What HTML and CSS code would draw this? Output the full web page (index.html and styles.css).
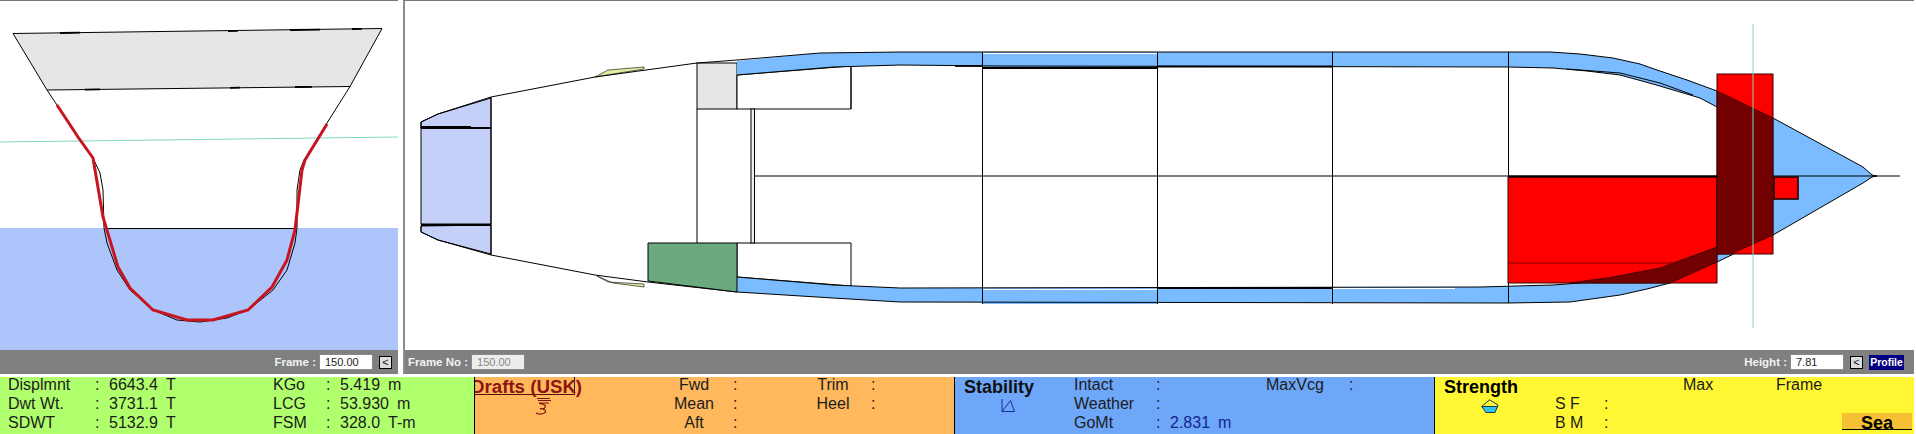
FILE: index.html
```html
<!DOCTYPE html>
<html lang="en">
<head>
<meta charset="utf-8">
<title>Loading computer</title>
<link rel="stylesheet" href="styles.css">
</head>
<body>
<div class="views">
  <section class="view view-section">
    <svg class="canvas" viewBox="0 1 398 349" aria-label="Frame section">
      <rect class="water" x="0" y="228" width="398" height="122"/>
      <polygon class="deck" points="13,33.5 382,28.5 350,86.5 47,90"/>
      <line class="thick" x1="60" y1="33" x2="80" y2="32.7"/>
      <line class="thick" x1="228" y1="31" x2="238" y2="30.8"/>
      <line class="thick" x1="290" y1="30" x2="320" y2="29.6"/>
      <line class="thick" x1="352" y1="29" x2="362" y2="28.8"/>
      <line class="thick" x1="85" y1="89.6" x2="100" y2="89.4"/>
      <line class="thick" x1="230" y1="87.8" x2="240" y2="87.7"/>
      <line class="thick" x1="295" y1="87" x2="312" y2="86.8"/>
      <polyline class="hull" points="47,90 57,105 77,135 93,158 100,173 103,190 104,228 107,243 117,270 130,290 153,310 177,320 200,322 227,318 248,310 273,290 287,270 295,243 297,228 297,190 300,170 304,160 327,123 350,86.5"/>
      <line class="hull" x1="105" y1="228.5" x2="297" y2="228.5"/>
      <line class="teal" x1="0" y1="142" x2="398" y2="137"/>
      <polyline class="red-line" points="57,105 78,137 93,158 103,217 118,267 130,288 153,310 187,320 213,320 248,310 272,287 287,260 295,230 302,170 305,160 327,124"/>
    </svg>
    <div class="toolbar">
      <span class="tool-label">Frame :</span>
      <div class="field">150.00</div>
      <div class="mini-btn">&lt;</div>
    </div>
  </section>

  <section class="view view-plan">
    <svg class="canvas" viewBox="405 1 1509 349" aria-label="Ship plan">
      <!-- transom -->
      <polygon class="peri" points="421,122 438,114 491,98 491,128 421,128"/>
      <rect class="peri" x="421" y="128" width="70" height="96"/>
      <polygon class="peri" points="421,232 438,240 491,254 491,225 421,226"/>
      <line class="thick" x1="421" y1="128" x2="491" y2="128"/>
      <line class="thick" x1="421" y1="225" x2="491" y2="225"/>
      <line class="line" x1="421" y1="126.5" x2="471" y2="126.5"/>
      <!-- patches -->
      <polygon class="patch" points="595,77 608,70 644,67 644,69 613,74"/>
      <polygon class="patch" points="597,276 608,282 644,284 644,287 613,283"/>
      <!-- rooms -->
      <rect class="grey-box" x="697" y="63" width="40" height="46"/>
      <polygon class="room" points="737,75 851,66 851,109 737,109"/>
      <polygon class="room" points="737,243 851,243 851,286 737,277"/>
      <!-- blue side tanks -->
      <polygon class="blue" points="737,61 820,53 900,52 1508,52 1550,52 1580,54 1613,58 1640,64 1657,70 1687,80 1717,91 1717,107 1700,98 1680,92 1653,84 1620,75 1587,71 1553,68 1508,67 1000,66 900,65 833,67 737,75"/>
      <polygon class="blue" points="737,277 833,285 900,288 1480,287 1553,285 1580,283 1613,277 1660,268 1717,247 1717,262 1670,283 1647,289 1620,295 1570,302 1508,303 900,302 833,298 737,292"/>
      <polygon class="blue" points="1717,91 1773,118 1863,167 1872,175 1877,176 1872,177 1863,183 1773,235 1717,262"/>
      <rect class="blue" x="982" y="53" width="175" height="15"/>
      <rect class="blue" x="982" y="289" width="175" height="15"/>
      <line class="white-line" x1="982" y1="53.5" x2="1157" y2="53.5"/>
      <line class="white-line" x1="982" y1="289.5" x2="1157" y2="289.5"/>
      <line class="white-line" x1="1332" y1="288.5" x2="1455" y2="288.5"/>
      <!-- hull lines -->
      <polyline class="hull" points="421,122 438,114 491,97 595,77 697,63 737,60 820,53 900,52 1508,52 1550,52 1580,54 1613,58 1640,64 1657,70 1687,80 1717,91 1773,118 1863,167 1872,175 1877,176 1872,177 1863,183 1773,235 1717,262 1670,283 1647,289 1620,295 1570,302 1508,303 900,302 833,298 737,292 648,282 595,275 491,255 438,240 421,232"/>
      <polyline class="hull" points="737,75 833,67 900,65 1000,66 1508,67 1553,68 1587,71 1620,75 1653,84 1680,92 1700,98 1717,107"/>
      <polyline class="hull" points="1567,69 1620,73 1660,83 1693,95"/>
      <polyline class="hull" points="737,277 833,285 900,288 1480,287 1553,285 1580,283 1613,277 1660,268 1717,247"/>
      <line class="hull" x1="421" y1="122" x2="421" y2="128"/>
      <line class="hull" x1="421" y1="226" x2="421" y2="232"/>
      <line class="thick" x1="1157" y1="66.5" x2="1332" y2="66.5"/>
      <line class="thick" x1="1157" y1="288" x2="1332" y2="288"/>
      <line class="thick" x1="955" y1="66" x2="982" y2="66"/>
      <line class="thick" x1="982" y1="68" x2="1157" y2="68"/>
      <!-- structure -->
      <line class="line" x1="491" y1="97" x2="491" y2="255"/>
      <line class="line" x1="851" y1="67" x2="851" y2="109"/>
      <polygon class="green" points="648,243 737,243 737,292 648,281"/>
      <line class="line" x1="697" y1="109" x2="697" y2="243"/>
      <rect class="strip" x="751" y="109" width="3.5" height="134"/>
      <line class="line" x1="754" y1="176" x2="1900" y2="176"/>
      <line class="line" x1="982.5" y1="52" x2="982.5" y2="304"/>
      <line class="line" x1="1157.5" y1="52" x2="1157.5" y2="304"/>
      <line class="line" x1="1332.5" y1="52" x2="1332.5" y2="304"/>
      <line class="line" x1="1508.5" y1="52" x2="1508.5" y2="303"/>
      <!-- red loads -->
      <rect class="red-box" x="1508" y="177" width="209" height="106"/>
      <line class="dark-line" x1="1508" y1="263" x2="1717" y2="263"/>
      <rect class="red-box" x="1717" y="74" width="56" height="180"/>
      <polygon class="maroon" points="1717,91 1773,118 1773,235 1731,254 1717,254"/>
      <polygon class="maroon" points="1717,247 1660,268 1613,277 1570,283 1670,283 1717,262"/>
      <line class="thick" x1="1508" y1="176.5" x2="1717" y2="176.5"/>
      <rect class="red-small" x="1774" y="177" width="24" height="22"/>
      <line class="teal" x1="1753" y1="24" x2="1753" y2="328"/>
    </svg>
    <div class="toolbar">
      <span class="tool-label">Frame No :</span>
      <div class="field field-off">150.00</div>
      <span class="tool-space"></span>
      <span class="tool-label">Height :</span>
      <div class="field">7.81</div>
      <div class="mini-btn">&lt;</div>
      <div class="profile-btn">Profile</div>
    </div>
  </section>
</div>

<div class="panels">
  <div class="panel panel-load">
    <span>Displmnt</span><span>:</span><span class="val">6643.4<i>T</i></span><span>KGo</span><span>:</span><span class="val">5.419<i>m</i></span>
    <span>Dwt Wt.</span><span>:</span><span class="val">3731.1<i>T</i></span><span>LCG</span><span>:</span><span class="val">53.930<i>m</i></span>
    <span>SDWT</span><span>:</span><span class="val">5132.9<i>T</i></span><span>FSM</span><span>:</span><span class="val">328.0<i>T-m</i></span>
  </div>

  <div class="panel panel-drafts">
    <div class="head">
      <div class="drafts-title"><span>Drafts (USK)</span></div>
      <svg class="icon icon-rupee" viewBox="0 0 17 17">
        <path d="M2 .5H15M3 2.5H16M4 5H14M4 5.5C9 6 11 7 10 9.5 9 11.5 6 11 5 10.5 9 11 11 12 10.5 14 9 16.5 3 16.5 1 15"/>
      </svg>
    </div>
    <span class="c">Fwd</span><span>:</span><span class="c">Trim</span><span>:</span>
    <span class="c">Mean</span><span>:</span><span class="c">Heel</span><span>:</span>
    <span class="c">Aft</span><span>:</span>
  </div>

  <div class="panel panel-stab">
    <div class="head">
      <div class="title">Stability</div>
      <svg class="icon icon-angle" viewBox="0 0 14 13">
        <path d="M1 0V12.5H13.5L9.5 1.5 1 12.5"/>
      </svg>
    </div>
    <span>Intact</span><span>:</span><span></span><span>MaxVcg</span><span>:</span>
    <span>Weather</span><span>:</span><span></span><span></span><span></span>
    <span>GoMt</span><span>:</span><span class="val val-blue">2.831<i>m</i></span><span></span><span></span>
  </div>

  <div class="panel panel-strength">
    <div class="head">
      <div class="title">Strength</div>
      <svg class="icon icon-boat" viewBox="0 0 18 15">
        <path class="boat-water" d="M.8 7.5H17L14 13.5H5Z"/>
        <path d="M8.5.8.8 7.5 5 13.5H14L17 6ZM.8 7.5H17"/>
      </svg>
    </div>
    <span></span><span></span><span class="hd">Max</span><span class="hd">Frame</span>
    <span>S F</span><span>:</span><span></span>
    <div class="sea-btn"><span>Sea</span></div>
    <span>B M</span><span>:</span>
  </div>
</div>
</body>
</html>
```

FILE: styles.css
```css
* { box-sizing: border-box; }
html, body { margin: 0; padding: 0; }
body {
  width: 1916px;
  height: 434px;
  overflow: hidden;
  background: #fff;
  font-family: "Liberation Sans", Arial, sans-serif;
  color: #1c1c1c;
}

.views { display: flex; height: 377px; }
.view {
  display: flex;
  flex-direction: column;
  height: 374px;
  border-top: 1px solid #777;
}
.view-section { width: 398px; }
.view-plan { width: 1511px; margin-left: 5px; border-left: 2px solid #8c8c8c; }
.canvas { display: block; width: 100%; height: 349px; }

.toolbar {
  display: flex;
  align-items: center;
  justify-content: flex-end;
  height: 24px;
  padding: 0 6px 0 3px;
  background: #808080;
}
.tool-label { font-size: 11.5px; font-weight: bold; color: #f2f2f2; margin-right: 3px; white-space: nowrap; }
.tool-space { flex: 1; }
.field {
  width: 54px;
  height: 16px;
  padding-left: 5px;
  background: #fff;
  border: 1px solid #8a8a8a;
  font-size: 11px;
  line-height: 14px;
  color: #222;
}
.field-off { background: #ededed; color: #888; }
.mini-btn {
  width: 13px;
  height: 13px;
  margin-left: 6px;
  background: #ddd;
  border: 1px solid #000;
  font-size: 11px;
  line-height: 10px;
  text-align: center;
  color: #111;
}
.profile-btn {
  width: 35px;
  height: 15px;
  margin: 0 4px 0 6px;
  background: #000080;
  color: #fff;
  font-size: 10.5px;
  font-weight: bold;
  line-height: 15px;
  text-align: center;
}

.water { fill: #aec5fb; }
.deck { fill: #e6e6e6; stroke: #000; stroke-width: 1; }
.hull, .line { fill: none; stroke: #000; stroke-width: 1; }
.thick { stroke: #000; stroke-width: 1.8; }
.teal { stroke: #7fd8c4; stroke-width: 1; }
.red-line { fill: none; stroke: #c8141f; stroke-width: 3; }
.peri { fill: #c5d0f8; stroke: #000; stroke-width: 1; }
.patch { fill: #dff0a0; stroke: #000; stroke-width: .6; }
.blue { fill: #7abcff; stroke: none; }
.white-line { stroke: #fff; stroke-width: 1; }
.grey-box { fill: #e6e6e6; stroke: #000; stroke-width: 1; }
.room { fill: #fff; stroke: #000; stroke-width: 1; }
.green { fill: #6aaa7e; stroke: #000; stroke-width: 1; }
.strip { fill: #eee; stroke: #000; stroke-width: 1; }
.red-box { fill: #ff0000; stroke: #3a0000; stroke-width: 1; }
.dark-line { stroke: #7a0000; stroke-width: 1; }
.maroon { fill: #720000; stroke: #300; stroke-width: .8; }
.red-small { fill: #ff0000; stroke: #200; stroke-width: 1.6; }

.panels { display: flex; height: 57px; }
.panel {
  display: grid;
  grid-template-rows: 14px 14px 1fr;
  row-gap: 5px;
  align-items: start;
  padding-top: 1px;
  font-size: 16px;
  line-height: 14px;
  white-space: nowrap;
}
.panel i { font-style: normal; margin-left: 8px; }
.c { text-align: center; }

.panel-load {
  position: relative;
  z-index: 1;
  width: 475px;
  padding-left: 8px;
  background: #b0ff6c;
  border-right: 1px solid #000;
  grid-template-columns: 87px 14px 164px 53px 14px 1fr;
}
.panel-drafts {
  width: 480px;
  background: #ffb85c;
  border-right: 1px solid #000;
  grid-template-columns: 180px 78px 62px 76px 1fr;
}
.panel-stab {
  width: 480px;
  background: #6ea6f8;
  border-right: 1px solid #000;
  grid-template-columns: 119px 82px 14px 96px 83px 1fr;
}
.panel-strength {
  width: 479px;
  background: #fff733;
  grid-template-columns: 120px 49px 79px 93px 1fr;
}

.head { grid-row: 1 / span 3; height: 56px; margin-top: -1px; }
.title { font-size: 18px; font-weight: bold; line-height: 20px; color: #111; padding-left: 9px; }
.panel-strength .title { color: #000; }
.drafts-title {
  width: 100px;
  height: 18px;
  border-right: 1px solid #222;
  border-bottom: 1px solid #5a1010;
  font-size: 18.7px;
  font-weight: bold;
  line-height: 19px;
  color: #8c1414;
}
.drafts-title span { margin-left: -4px; }
.icon { display: block; fill: none; stroke-width: 1; }
.icon-rupee { width: 17px; height: 17px; margin: 3px 0 0 60px; stroke: #7a1010; stroke-width: 1.2; }
.icon-angle { width: 14px; height: 13px; margin: 2px 0 0 46px; stroke: #1a2ba0; }
.icon-boat { width: 18px; height: 15px; margin: 2px 0 0 46px; stroke: #0c3c5c; }
.boat-water { fill: #35c4e8; stroke: none; }
.val-blue { color: #14248c; }

.sea-btn {
  grid-column: 5;
  grid-row: 2 / span 2;
  align-self: start;
  justify-self: end;
  width: 70px;
  height: 17px;
  margin: 16px 2px 0 0;
  background: #f5c033;
  border-bottom: 1px solid #000;
  font-size: 18px;
  font-weight: bold;
  line-height: 21px;
  text-align: center;
  color: #000;
}
```
